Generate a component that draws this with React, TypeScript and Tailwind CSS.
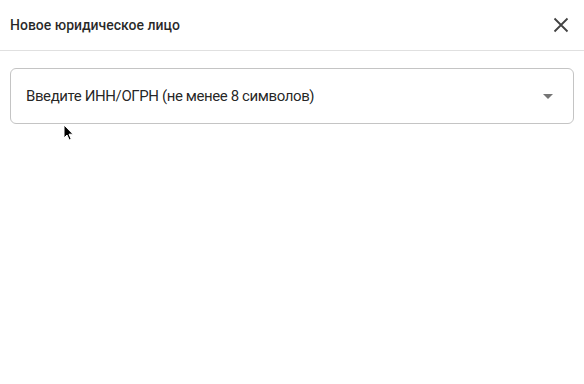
import React from "react";

export default function App() {
  return (
    <div className="relative w-[584px] h-[384px] bg-white font-['Roboto',sans-serif] text-[#212121]">
      <div className="flex items-center justify-between h-[51px] pl-[10px] pr-[11px] border-b border-[#e0e0e0]">
        <span className="text-[14px] font-medium text-black/85">Новое юридическое лицо</span>
        <button className="flex items-center justify-center w-6 h-6 text-[#424242]">
          <svg width="16" height="16" viewBox="0 0 16 16" fill="none" stroke="currentColor" strokeWidth="1.8">
            <path d="M1.5 1.5l13 13M14.5 1.5l-13 13" />
          </svg>
        </button>
      </div>
      <div className="px-[10px] pt-[17px]">
        <div className="flex items-center justify-between h-[56px] pl-[15px] pr-[20px] border border-[#c4c4c4] rounded-[6px]">
          <span className="text-[15px] tracking-[-0.4px] text-black/87">Введите ИНН/ОГРН (не менее 8 символов)</span>
          <svg width="10" height="5" viewBox="0 0 10 5" className="text-[#757575]">
            <path d="M0 0h10L5 5z" fill="currentColor" />
          </svg>
        </div>
      </div>
      <svg className="absolute left-[63px] top-[124px]" width="12" height="18" viewBox="0 0 12 18">
        <path d="M1 1v13l3-3 2.2 5 2-0.9-2.2-4.9H10z" fill="#000" stroke="#fff" strokeWidth="1" />
      </svg>
    </div>
  );
}
